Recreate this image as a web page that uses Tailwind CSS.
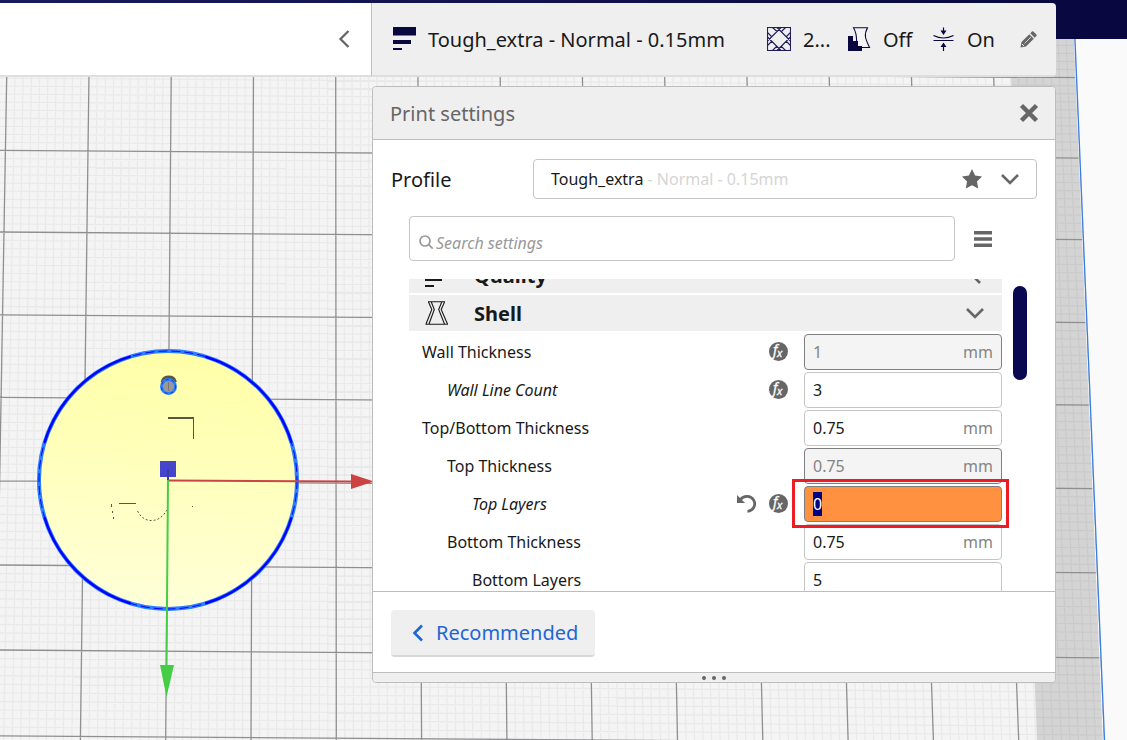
<!DOCTYPE html>
<html lang="en">
<head>
<meta charset="utf-8">
<meta name="viewport" content="width=device-width, initial-scale=1">
<title>Print settings</title>
<script src="https://cdn.jsdelivr.net/npm/@tailwindcss/browser@4"></script>
</head>
<body class="relative min-h-screen overflow-hidden bg-[#fafafa] font-['Noto_Sans',sans-serif] text-[#191919]">

<!-- Build plate -->
<svg class="absolute inset-0 h-full w-full" viewBox="0 0 1127 740" preserveAspectRatio="xMinYMin slice" aria-hidden="true">
  <defs>
    <clipPath id="plate"><path d="M0 0H1073L1104 740H0z"/></clipPath>
    <clipPath id="printable"><path d="M0 0H1008L1037 740H0z"/></clipPath>
    <linearGradient id="model" x1="0.6" y1="0" x2="0.5" y2="1"><stop offset="0" stop-color="#ffffa8"/><stop offset="0.4" stop-color="#ffffba"/><stop offset="1" stop-color="#ffffd9"/></linearGradient>
  </defs>
  <g clip-path="url(#plate)">
    <rect width="1127" height="740" fill="#d4d4d4"/>
    <rect width="1127" height="740" fill="#f4f4f4" clip-path="url(#printable)"/>
    <path id="minor" fill="none" stroke="#000" stroke-opacity="0.045" stroke-width="1.3"/>
    <path id="major" fill="none" stroke="#8f8f91" stroke-width="1.3"/>
  </g>
  <path d="M1072.5 0L1103.300 740" stroke="#fff" stroke-width="1"/>
  <path d="M1073.300 0L1104.500 740" stroke="#3a7de0" stroke-width="1.300"/>

  <circle cx="168" cy="480" r="129" fill="url(#model)" stroke="#2b80ff" stroke-width="4"/>
  <circle cx="168" cy="480" r="129" fill="none" stroke="#0000ff" stroke-width="1" stroke-dasharray="9 4"/>
  <circle cx="168" cy="480" r="129" fill="none" stroke="#0000ff" stroke-width="2.400" stroke-dasharray="127 75.600" stroke-dashoffset="-37.800"/>
  <path d="M162 381a7 6 0 0 1 13.500 0z" fill="#5b553f" stroke="#5b553f" stroke-width="2"/>
  <circle cx="168.500" cy="386.500" r="7" fill="#999" stroke="#2b80ff" stroke-width="3"/>
  <circle cx="168.500" cy="386.500" r="7" fill="none" stroke="#1437c8" stroke-width="1" stroke-dasharray="3 3"/>
  <path d="M168.500 382v9" stroke="#777"/>
  <path d="M168 418h25.500" stroke="#5a5644" stroke-width="2"/>
  <path d="M193.500 417v22" stroke="#5a5644"/>
  <g fill="none" stroke="#5a5644">
    <path d="M119 503.500h17M111.500 504v3M112.500 511v2M113.500 517v2M192 506.500h1"/>
    <path d="M137.500 511C141 518 146 520.500 151.500 520.500S162 518 167 510" stroke-dasharray="2 2"/>
  </g>
  <rect x="160" y="461" width="16" height="16" fill="#4545cb"/>
  <path d="M168 469v11" stroke="#3a3ab4" stroke-width="2"/>
  <path d="M168 480.500L352 481.500" stroke="#cc4545" stroke-width="2"/>
  <path d="M351 474L374 481.500L351 489z" fill="#cc4343"/>
  <path d="M168 480L166.500 667" stroke="#45cd45" stroke-width="2"/>
  <path d="M160 665h14L166.500 697z" fill="#45cd45"/>
</svg>

<div class="relative">
  <header class="h-[39px] bg-linear-to-r from-[#191a5c] to-[#08073f]"></header>

  <main class="-mt-9 grid grid-cols-[minmax(0,371fr)_minmax(0,685fr)_minmax(0,71fr)]">
    <section class="flex h-[74px] items-center justify-end border-b-2 border-[#dfdfdf] bg-white pr-[19px]">
      <button type="button" aria-label="Collapse" class="flex h-8 w-4 items-center justify-center text-[#666]">
        <svg class="h-5 w-3" viewBox="0 0 12 20" fill="none" stroke="currentColor" stroke-width="2.300"><path d="M10.500 2L2.500 10L10.500 18"/></svg>
      </button>
    </section>

    <div>
      <section class="flex h-[74px] items-center rounded-r-sm border-b-2 border-l border-b-[#dedede] border-l-[#c0c0c0] bg-[#efefef] pr-[19px] pl-5 text-xl">
        <svg class="mr-3 h-6 w-6 shrink-0 text-[#08073f]" viewBox="0 0 24 24" fill="currentColor" aria-hidden="true"><path d="M1 0h23v8.500H1zM1 13h18v4H1zM1 21h9v2H1z"/></svg>
        <h1 class="flex-1 pt-0.5 whitespace-nowrap">Tough_extra - Normal - 0.15mm</h1>
        <div class="flex w-20 items-center gap-3">
          <svg class="h-6 w-6 text-[#211d5e]" viewBox="0 0 24 24" fill="none" stroke="currentColor" stroke-width="1.100" aria-hidden="true"><rect x="0.500" y="0.500" width="23" height="23"/><path d="M0.500 14L14 0.500M10 0.500L23.500 14M0.500 10L14 23.500M23.500 10L10 23.500M0.500 5.500L5 10M5.500 0.500L10 4.500M18.500 0.500L14 5M23.500 5.500L19 10M0.500 18.500L5 14M5.500 23.500L10 19M18.500 23.500L14 19M23.500 18.500L19 14"/></svg>
          <span class="pt-0.5">2...</span>
        </div>
        <div class="flex w-21 items-center gap-3">
          <svg class="h-6 w-6 text-[#08073f]" viewBox="0 0 24 24" aria-hidden="true"><path d="M6.500 0.700H20.500C16.500 8 18.500 12 22.500 20.500H10C9 14 11 8 6.500 0.700z" fill="#f4f4f4" stroke="currentColor" stroke-width="1.100"/><path d="M1 9h5v5h5v5h4v5H1z" fill="currentColor"/></svg>
          <span class="pt-0.5">Off</span>
        </div>
        <div class="flex w-[89px] items-center gap-3">
          <svg class="h-6 w-6 text-[#08073f]" viewBox="0 0 24 24" fill="none" stroke="currentColor" stroke-width="1.200" aria-hidden="true"><path d="M2.500 8.500Q12.500 13.500 22.500 8.500M2.500 13.500h20M12.500 0.500v4M12.500 19v5"/><path d="M9.500 3.500h6L12.500 8zM9.500 20h6L12.500 15.500z" fill="currentColor" stroke="none"/></svg>
          <span class="pt-0.5">On</span>
        </div>
        <button type="button" aria-label="Edit print settings" class="text-[#666]">
          <svg class="h-[17px] w-[17px]" viewBox="0 0 17 17" fill="currentColor"><path d="M0.500 16.500l1-5.500L9.300 3.200l4.500 4.500L6 15.500zM10.300 2.300L12 0.600q.7-.6 1.400 0l3 3q.6.700 0 1.400L14.700 6.700z"/><path d="M4.500 12.500L11 6" stroke="#efefef" stroke-width="0.800"/><path d="M2 13l2 2" stroke="#efefef" stroke-width="1"/></svg>
        </button>
      </section>

      <section class="mt-[9px] ml-px rounded-sm border border-[#bdbdbd] bg-white" aria-labelledby="panel-title">
        <div class="flex h-[53px] items-center justify-between rounded-t-sm border-b border-[#bdbdbd] bg-[#efefef] pr-4 pl-[17px]">
          <h2 id="panel-title" class="pt-0.5 text-xl text-[#666]">Print settings</h2>
          <button type="button" aria-label="Close" class="text-[#666]">
            <svg class="h-5 w-5" viewBox="0 0 20 20" fill="none" stroke="currentColor" stroke-width="4.500"><path d="M2.500 2.500L17.500 17.500M17.500 2.500L2.500 17.500"/></svg>
          </button>
        </div>

        <div class="flex items-center pt-[19px] pr-[18px] pl-[18px]">
          <label for="profile" class="w-[142px] pt-0.5 text-xl">Profile</label>
          <div class="relative flex h-10 flex-1 items-center rounded-sm border border-[#c5c5c5] pr-4 pl-[17px] text-base">
            <p class="flex-1" aria-hidden="true">Tough_extra <span class="text-[#d5d5d5]">- Normal - 0.15mm</span></p>
            <svg class="mr-[18px] h-5 w-5 text-[#666]" viewBox="0 0 20 20" fill="currentColor" aria-hidden="true"><path d="M10 0l3.100 6.400 6.900 1-5 5 1.200 7L10 16.300 3.800 19.400l1.200-7-5-5 6.900-1z"/></svg>
            <svg class="h-5 w-5 text-[#666]" viewBox="0 0 20 20" fill="none" stroke="currentColor" stroke-width="2.600" aria-hidden="true"><path d="M2 6L10 14L18 6"/></svg>
            <select id="profile" class="absolute inset-0 h-full w-full cursor-pointer opacity-0"><option>Tough_extra - Normal - 0.15mm</option></select>
          </div>
        </div>

        <div class="flex items-center pt-[17px] pl-9">
          <div class="flex h-[45px] flex-1 items-center rounded-sm border border-[#c5c5c5] pt-2 pl-[9px]">
            <svg class="h-[15px] w-[15px] text-[#999]" viewBox="0 0 15 15" fill="none" stroke="currentColor" stroke-width="1.700" aria-hidden="true"><circle cx="6" cy="6" r="5"/><path d="M9.700 9.700L13.700 13.700"/></svg>
            <input type="text" aria-label="Search settings" placeholder="Search settings" class="ml-0.5 min-w-0 flex-1 text-base italic outline-none placeholder:text-[#999]">
          </div>
          <button type="button" aria-label="Setting visibility" class="mr-[63px] ml-[19px] text-[#666]">
            <svg class="h-4 w-[18px]" viewBox="0 0 18 16" fill="currentColor"><path d="M0 0h18v3.500H0zM0 6.200h18v3.500H0zM0 12.500h18v3.500H0z"/></svg>
          </button>
        </div>

        <div class="mt-[18px] flex h-[312px] overflow-hidden pr-7 pl-9">
          <div class="-mt-[22px] flex-1">
            <h3 class="mb-0.5 flex h-9 items-center bg-[#efefef] px-4">
              <svg class="h-6 w-6" viewBox="0 0 24 24" fill="currentColor" aria-hidden="true"><path d="M0 0h23v9H0zM0 14h17v4H0zM0 22h9v2H0z"/></svg>
              <span class="flex-1 pt-0.5 pl-[25px] text-xl font-bold">Quality</span>
              <svg class="h-5 w-5 text-[#666]" viewBox="0 0 20 20" fill="none" stroke="currentColor" stroke-width="2.600" aria-hidden="true"><path d="M13 2L6 10L14 18"/></svg>
            </h3>
            <h3 class="flex h-9 items-center bg-[#efefef] px-4">
              <svg class="h-6 w-6" viewBox="0 0 24 24" fill="none" stroke="currentColor" stroke-width="1.100" aria-hidden="true"><path d="M3 .7H20M.5 23.200H23M3.500 1L6.800 8.500L1 23M6.300 1L9.300 8.500L4 23M19.500 1L16.200 8.500L22.500 23M16.700 1L13.700 8.500L19.500 23"/></svg>
              <span class="flex-1 pt-0.5 pl-[25px] text-xl font-bold">Shell</span>
              <svg class="mr-px h-5 w-5 text-[#666]" viewBox="0 0 20 20" fill="none" stroke="currentColor" stroke-width="2.600" aria-hidden="true"><path d="M2 6L10 14L18 6"/></svg>
            </h3>

            <div class="grid gap-0.5 pt-[3px] text-base">
              <div class="flex h-9 items-center pl-[13px]">
                <label for="wall-thickness" class="flex-1">Wall Thickness</label>
                <button type="button" aria-label="Calculated value" class="mr-4 mb-px text-[#666]"><svg class="h-[19px] w-[19px] overflow-visible" viewBox="0 0 19 19"><circle cx="9.500" cy="9.500" r="9.500" fill="currentColor"/><text x="4" y="13" fill="#fff" stroke="#fff" stroke-width="0.300" font-family="Noto Sans" font-style="italic" font-size="14">f</text><text x="8" y="15" fill="#fff" stroke="#fff" stroke-width="0.300" font-family="Noto Sans" font-style="italic" font-size="11">x</text></svg></button>
                <div class="flex h-9 w-[198px] items-center rounded-sm border border-[#7f7f7f] bg-[#f4f4f4] px-2 text-[#848484]">
                  <input id="wall-thickness" type="text" value="1" class="min-w-0 flex-1 outline-none"><span>mm</span>
                </div>
              </div>
              <div class="flex h-9 items-center pl-[38px]">
                <label for="wall-lines" class="flex-1 italic">Wall Line Count</label>
                <button type="button" aria-label="Calculated value" class="mr-4 mb-px text-[#666]"><svg class="h-[19px] w-[19px] overflow-visible" viewBox="0 0 19 19"><circle cx="9.500" cy="9.500" r="9.500" fill="currentColor"/><text x="4" y="13" fill="#fff" stroke="#fff" stroke-width="0.300" font-family="Noto Sans" font-style="italic" font-size="14">f</text><text x="8" y="15" fill="#fff" stroke="#fff" stroke-width="0.300" font-family="Noto Sans" font-style="italic" font-size="11">x</text></svg></button>
                <div class="flex h-9 w-[198px] items-center rounded-sm border border-[#c5c5c5] bg-white px-2">
                  <input id="wall-lines" type="text" value="3" class="min-w-0 flex-1 outline-none">
                </div>
              </div>
              <div class="flex h-9 items-center pl-[13px]">
                <label for="tb-thickness" class="flex-1">Top/Bottom Thickness</label>
                <div class="flex h-9 w-[198px] items-center rounded-sm border border-[#c5c5c5] bg-white px-2">
                  <input id="tb-thickness" type="text" value="0.75" class="min-w-0 flex-1 outline-none"><span class="text-[#848484]">mm</span>
                </div>
              </div>
              <div class="flex h-9 items-center pl-[38px]">
                <label for="top-thickness" class="flex-1">Top Thickness</label>
                <div class="flex h-9 w-[198px] items-center rounded-sm border border-[#7f7f7f] bg-[#f4f4f4] px-2 text-[#848484]">
                  <input id="top-thickness" type="text" value="0.75" class="min-w-0 flex-1 outline-none"><span>mm</span>
                </div>
              </div>
              <div class="flex h-9 items-center pl-[63px]">
                <label for="top-layers" class="flex-1 italic">Top Layers</label>
                <button type="button" aria-label="Reset to profile value" class="mr-3 text-[#666]"><svg class="h-5 w-5" viewBox="0 0 20 20" fill="none" stroke="currentColor" stroke-width="2.800"><path d="M3.500 5.500A7.800 7.500 0 1 1 10.500 17.300"/><path d="M0 1v8h8z" fill="currentColor" stroke="none"/></svg></button>
                <button type="button" aria-label="Calculated value" class="mr-4 mb-px text-[#666]"><svg class="h-[19px] w-[19px] overflow-visible" viewBox="0 0 19 19"><circle cx="9.500" cy="9.500" r="9.500" fill="currentColor"/><text x="4" y="13" fill="#fff" stroke="#fff" stroke-width="0.300" font-family="Noto Sans" font-style="italic" font-size="14">f</text><text x="8" y="15" fill="#fff" stroke="#fff" stroke-width="0.300" font-family="Noto Sans" font-style="italic" font-size="11">x</text></svg></button>
                <div class="relative z-10 flex h-9 w-[198px] items-center rounded-sm border border-[#7f7f7f] bg-[#ff9140] px-2">
                  <input id="top-layers" type="text" value="0" class="min-w-0 flex-1 outline-none selection:bg-[#000080] selection:text-white">
                  <div class="pointer-events-none absolute -top-2 -right-2 -bottom-[7px] -left-[13px] border-3 border-[#ed1c24]"></div>
                </div>
              </div>
              <div class="flex h-9 items-center pl-[38px]">
                <label for="bottom-thickness" class="flex-1">Bottom Thickness</label>
                <div class="flex h-9 w-[198px] items-center rounded-sm border border-[#c5c5c5] bg-white px-2">
                  <input id="bottom-thickness" type="text" value="0.75" class="min-w-0 flex-1 outline-none"><span class="text-[#848484]">mm</span>
                </div>
              </div>
              <div class="flex h-9 items-center pl-[63px]">
                <label for="bottom-layers" class="flex-1">Bottom Layers</label>
                <div class="flex h-9 w-[198px] items-center rounded-sm border border-[#c5c5c5] bg-white px-2">
                  <input id="bottom-layers" type="text" value="5" class="min-w-0 flex-1 outline-none">
                </div>
              </div>
            </div>
          </div>
          <div class="mt-[7px] ml-[11px] h-[94px] w-3.5 rounded-full bg-[#0a0850]"></div>
        </div>

        <div class="border-t border-[#bdbdbd] px-[18px] pt-[18px] pb-[15px]">
          <button type="button" class="flex h-[47px] items-center gap-3 rounded-sm border-b-2 border-[#d8d8d8] bg-[#efefef] pr-[17px] pl-[21px] text-xl text-[#1e66d7]">
            <svg class="h-[18px] w-3" viewBox="0 0 12 18" fill="none" stroke="currentColor" stroke-width="2.600" aria-hidden="true"><path d="M10 1.500L2.500 9L10 16.500"/></svg>
            Recommended
          </button>
        </div>
        <div class="flex h-2.5 items-center justify-center gap-1.5 rounded-b-sm border-t border-[#bdbdbd] bg-[#efefef]">
          <span class="h-1 w-1 rounded-full bg-[#666]"></span><span class="h-1 w-1 rounded-full bg-[#666]"></span><span class="h-1 w-1 rounded-full bg-[#666]"></span>
        </div>
      </section>
    </div>
  </main>
</div>

<script>
  // Grid of the build plate: ten minor cells to each major cell, seen in slight perspective.
  const minor = [], major = [];
  for (let i = -50; i <= 90; i++) {
    const k = i / 10;
    const top = 335.7 + 82.25 * k, bottom = 336.3 + 85.3 * k;
    const slope = (bottom - top) / 663;
    (i % 10 ? minor : major).push(`M${top - 77 * slope} 0L${bottom} 740`);
  }
  const rows = [-11, 70, 150.4, 232, 314.8, 397.3, 480.8, 565, 650, 735.8, 822];
  for (let r = 0; r < rows.length - 1; r++) {
    for (let j = 0; j < 10; j++) {
      const y = rows[r] + (rows[r + 1] - rows[r]) * j / 10;
      (j ? minor : major).push(`M0 ${y}L1127 ${y + 8}`);
    }
  }
  document.getElementById('minor').setAttribute('d', minor.join(''));
  document.getElementById('major').setAttribute('d', major.join(''));

  const active = document.getElementById('top-layers');
  active.focus();
  active.select();
</script>
</body>
</html>
